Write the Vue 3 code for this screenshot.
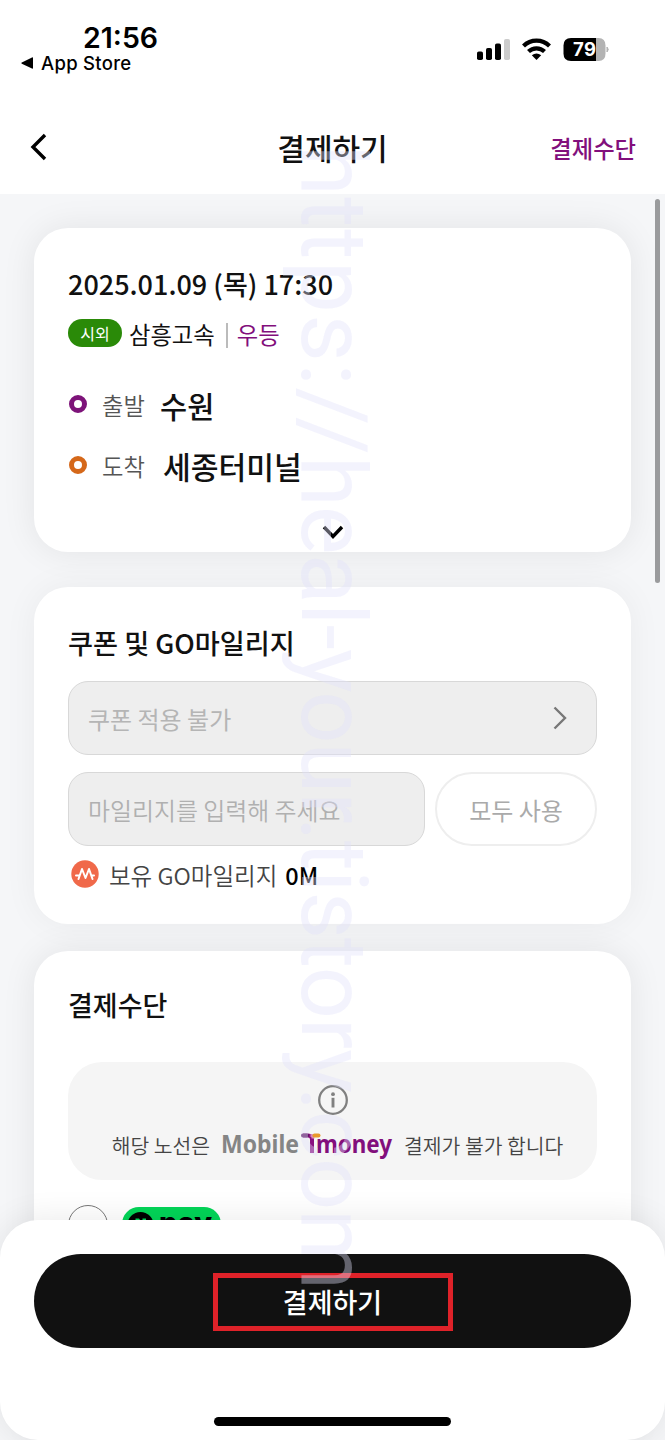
<script setup>
import { ref } from 'vue'

const stops = [
  { type: 'depart', label: '출발', name: '수원' },
  { type: 'arrive', label: '도착', name: '세종터미널' },
]

const mileage = ref('')
const method = ref('')
</script>

<template>
  <div class="screen">
    <div class="status-bar">
      <div class="status-left">
        <p class="clock">21:56</p>
        <p class="back-app">
          <svg width="13" height="12" viewBox="0 0 13 12" aria-hidden="true">
            <path d="M12 1v10q0 1-1 .5L.8 6.700q-1-.7 0-1.300L11 .5q1-.5 1 .5z" />
          </svg>
          App Store
        </p>
      </div>
      <svg class="status-icons" width="134" height="26" viewBox="0 0 134 26" aria-hidden="true">
        <rect x="2" y="14.500" width="6" height="8.500" rx="1.800" />
        <rect x="11" y="11" width="6" height="12" rx="1.800" />
        <rect x="20" y="6.500" width="6" height="16.500" rx="1.800" />
        <rect x="29" y="2" width="6" height="21" rx="1.800" fill="#ccc" />
        <g fill="none" stroke="#000" stroke-width="4.200">
          <path d="M48.500 9a18.500 18.500 0 0 1 26 0" />
          <path d="M53.500 14.600a11.500 11.500 0 0 1 16 0" />
        </g>
        <path d="M61.500 23l-4.700-4.700q4.700-3.600 9.400 0z" />
        <path d="M96 1h25v23H96q-7.500 0-7.500-7.500v-8Q88.500 1 96 1z" />
        <path d="M121 1h2.500q7 0 7 7.500v8q0 7.500-7 7.500H121z" fill="#b3b3b3" />
        <path d="M132 10q2.500 2.500 0 5z" fill="#b3b3b3" stroke="#b3b3b3" />
        <text x="98" y="19" class="battery-level" textLength="23">79</text>
      </svg>
    </div>

    <header class="nav">
      <button type="button" class="nav-back" aria-label="뒤로">
        <svg width="19" height="28" viewBox="0 0 19 28" fill="none">
          <path d="M16 2L4 14l12 12" stroke="#000" stroke-width="3.400" />
        </svg>
      </button>
      <h1 class="nav-title">결제하기</h1>
      <a class="nav-link">결제수단</a>
    </header>

    <main class="content">
      <section class="card trip">
        <p class="trip-date">2025.01.09 (목) 17:30</p>
        <p class="trip-bus">
          <span class="badge">시외</span>
          <span class="company">삼흥고속</span>
          <span class="divider"></span>
          <span class="grade">우등</span>
        </p>
        <div v-for="stop in stops" :key="stop.type" class="stop" :class="stop.type">
          <span class="stop-dot"></span>
          <span class="stop-label">{{ stop.label }}</span>
          <strong class="stop-name">{{ stop.name }}</strong>
        </div>
        <svg class="expand" width="22" height="16" viewBox="0 0 22 16" fill="none" aria-hidden="true">
          <path d="M2 2l9 9.500L20 2" stroke="#000" stroke-width="3.400" />
        </svg>
      </section>

      <section class="card coupon">
        <h2>쿠폰 및 GO마일리지</h2>
        <button type="button" class="field coupon-select" disabled>
          쿠폰 적용 불가
          <svg width="14" height="24" viewBox="0 0 14 24" fill="none">
            <path d="M1.500 1.500L12 12L1.500 22.500" stroke="#777" stroke-width="2.400" />
          </svg>
        </button>
        <div class="mileage-row">
          <input v-model="mileage" class="field mileage-input" placeholder="마일리지를 입력해 주세요" disabled />
          <button type="button" class="use-all" disabled>모두 사용</button>
        </div>
        <p class="balance">
          <svg width="28" height="28" viewBox="0 0 28 28" fill="none" aria-hidden="true">
            <circle cx="14" cy="14" r="13.700" fill="#f0694a" />
            <path
              d="M5 15.500h2.800M7.500 19L11 9l3.500 9L18 9l3.500 10M20.500 15.500H23"
              stroke="#fff"
              stroke-width="2"
              stroke-linejoin="round"
              stroke-linecap="round"
            />
          </svg>
          <span class="balance-label">보유 GO마일리지</span>
          <strong>0M</strong>
        </p>
      </section>

      <section class="card payment">
        <h2>결제수단</h2>
        <div class="notice">
          <svg width="32" height="32" viewBox="0 0 32 32" fill="none" aria-hidden="true">
            <circle cx="16" cy="16" r="13.800" stroke="#808080" stroke-width="2.300" />
            <circle cx="16" cy="10.200" r="1.900" fill="#808080" />
            <path d="M16 13.800v9.700" stroke="#808080" stroke-width="2.900" />
          </svg>
          <p class="notice-text">
            <span>해당 노선은</span>
            <svg class="tmoney" width="172" height="34" viewBox="0 0 172 34">
              <text x="0" y="25" class="logo-mobile" textLength="78" lengthAdjust="spacingAndGlyphs">Mobile</text>
              <path d="M82 7.500h5q4 0 4 4V25" fill="none" stroke="#8a0f80" stroke-width="4" />
              <path d="M82 7.500h4" stroke="#5b1260" stroke-width="4" stroke-linecap="round" />
              <path d="M89.500 7.500h1q1.500 0 1.500 3" fill="none" stroke="#d989b5" stroke-width="3" />
              <path d="M93.500 7.500h4" stroke="#e8992c" stroke-width="4" stroke-linecap="round" />
              <text x="95" y="25" class="logo-money" textLength="76" lengthAdjust="spacingAndGlyphs">money</text>
            </svg>
            <span>결제가 불가 합니다</span>
          </p>
        </div>
        <label class="pay-option">
          <input v-model="method" type="radio" value="npay" class="radio" />
          <svg width="99" height="40" viewBox="0 0 99 40">
            <rect width="99" height="40" rx="17" fill="#03d558" />
            <circle cx="18.500" cy="18" r="13" fill="#000" />
            <path d="M13.500 24v-12.500h3.500l3.500 5v-5H24V24h-3.500l-3.500-5v5z" fill="#03d558" />
            <text x="37" y="26" class="npay-text" textLength="53" lengthAdjust="spacingAndGlyphs">pay</text>
          </svg>
        </label>
      </section>
      <span class="scrollbar"></span>
    </main>

    <footer class="sheet">
      <button type="button" class="pay-btn">
        결제하기
        <span class="highlight"></span>
      </button>
      <span class="home-indicator"></span>
    </footer>

    <svg class="watermark" width="90" height="1160" viewBox="0 0 90 1160" aria-hidden="true">
      <g transform="translate(22 5) rotate(90)">
        <text x="0" textLength="310">https://</text>
        <text x="311" textLength="834">heal-your.tistory.com</text>
      </g>
    </svg>
  </div>
</template>

<style>
body {
  margin: 0;
  background: #f5f6f8;
}
</style>

<style scoped>
.screen {
  position: relative;
  display: flex;
  flex-direction: column;
  width: 665px;
  height: 1440px;
  overflow: hidden;
  background: #f5f6f8;
  color: #111;
  font-family: 'Noto Sans CJK KR', sans-serif;
}

.screen * {
  box-sizing: border-box;
}

p,
h1,
h2 {
  margin: 0;
}

button,
input {
  font-family: inherit;
}

.status-bar {
  display: flex;
  justify-content: space-between;
  height: 100px;
  flex-shrink: 0;
  padding: 22px 56px 0 21px;
  background: #fff;
  color: #000;
  font-family: Inter, sans-serif;
}

.clock {
  padding-left: 62px;
  font-size: 28.500px;
  font-weight: 600;
  line-height: 31px;
}

.back-app {
  display: flex;
  align-items: center;
  gap: 7px;
  font-size: 18.500px;
  font-weight: 500;
  line-height: 20px;
  letter-spacing: 0.3px;
}

.status-icons {
  margin-top: 15px;
}

.battery-level {
  fill: #fff;
  font-size: 18.500px;
  font-weight: 700;
}

.nav {
  display: grid;
  grid-template-columns: 1fr auto 1fr;
  align-items: center;
  height: 94px;
  flex-shrink: 0;
  padding: 0 29px;
  background: #fff;
}

.nav-back {
  display: flex;
  justify-self: start;
  padding: 0;
  border: 0;
  background: none;
}

.nav-title {
  font-size: 30px;
  font-weight: 500;
  line-height: 40px;
}

.nav-link {
  justify-self: end;
  padding-top: 2px;
  color: #820f7c;
  font-size: 23.300px;
  font-weight: 500;
}

.content {
  position: relative;
  flex: 1;
  min-height: 0;
  padding: 34px 34px 0;
  overflow: hidden;
}

.card {
  display: flex;
  flex-direction: column;
  padding: 0 34px;
  border-radius: 34px;
  background: #fff;
  box-shadow: 0 0 34px rgba(0, 0, 0, 0.08);
}

.trip {
  height: 324px;
  padding-top: 38px;
}

.trip-date {
  font-size: 27px;
  font-weight: 500;
  line-height: 36px;
}

.trip-bus {
  display: flex;
  align-items: center;
  height: 30px;
  margin-top: 16px;
  font-size: 23.300px;
}

.company,
.grade {
  padding-top: 2px;
}

.badge {
  width: 54px;
  height: 28px;
  margin-right: 7px;
  border-radius: 14px;
  background: #2a8a08;
  color: #fff;
  font-size: 16px;
  line-height: 28px;
  text-align: center;
}

.divider {
  width: 2px;
  height: 25px;
  margin: 4px 9px 0 11px;
  background: #bbb;
}

.grade {
  color: #820f7c;
}

.stop {
  display: flex;
  align-items: center;
  height: 40px;
  margin-top: 21px;
}

.depart {
  margin-top: 37px;
}

.stop-dot {
  width: 18px;
  height: 18px;
  margin: 0 15px 2px 1px;
  border: 5px solid #7d1379;
  border-radius: 50%;
}

.arrive .stop-dot {
  border-color: #d5681a;
}

.stop-label {
  width: 58px;
  color: #555;
  font-size: 23.300px;
  font-weight: 350;
}

.stop-name {
  font-size: 29.500px;
  font-weight: 500;
}

.arrive .stop-label {
  width: 61px;
}

.arrive .stop-name {
  font-size: 30.200px;
}

.expand {
  align-self: center;
  margin-top: 39px;
}

.coupon {
  height: 337px;
  margin-top: 35px;
  padding-top: 35px;
  box-shadow: 0 0 34px rgba(0, 0, 0, 0.05);
}

h2 {
  font-size: 27px;
  font-weight: 500;
  line-height: 40px;
}

.coupon h2 {
  font-size: 27.200px;
}

.field {
  height: 74px;
  padding: 0 29px 0 19px;
  border: 1px solid #d8d8d8;
  border-radius: 20px;
  background: #eee;
  color: #b5b5b5;
  font-size: 24px;
}

.coupon-select {
  display: flex;
  align-items: center;
  justify-content: space-between;
  margin-top: 19px;
}

.mileage-row {
  display: flex;
  gap: 10px;
  margin-top: 17px;
}

.mileage-input {
  width: 357px;
  padding-right: 0;
  font-size: 23.900px;
  font-weight: 350;
}

.mileage-input::placeholder {
  color: #b0b0b0;
  opacity: 1;
}

.use-all {
  flex: 1;
  padding: 0;
  border: 2px solid #eee;
  border-radius: 37px;
  background: #fff;
  color: #aaa;
  font-size: 24px;
}

.balance {
  display: flex;
  align-items: center;
  height: 30px;
  margin: 13px 0 0 3px;
  font-size: 23.500px;
}

.balance-label,
.balance strong {
  padding-top: 1px;
}

.balance-label {
  margin: 0 8px 0 10px;
  color: #444;
  font-weight: 350;
}

.balance strong {
  color: #000;
  font-weight: 500;
}

.payment {
  height: 500px;
  margin-top: 27px;
  padding-top: 34px;
}

.notice {
  display: flex;
  flex-direction: column;
  align-items: center;
  height: 118px;
  margin-top: 37px;
  padding-top: 22px;
  border-radius: 34px;
  background: #f5f5f5;
}

.notice-text {
  display: flex;
  align-items: center;
  gap: 11px;
  margin-top: 12px;
  padding-left: 10px;
  color: #444;
  font-size: 20.400px;
  font-weight: 350;
  line-height: 34px;
}

.tmoney {
  overflow: visible;
}

.logo-mobile,
.logo-money {
  font-family: 'Noto Sans', sans-serif;
  font-size: 24.500px;
  font-weight: 700;
}

.logo-mobile {
  fill: #858585;
}

.logo-money {
  fill: #820f7c;
}

.pay-option {
  display: flex;
  gap: 14px;
  margin-top: 25px;
}

.radio {
  appearance: none;
  width: 40px;
  height: 40px;
  margin: 0;
  border: 1.500px solid #777;
  border-radius: 50%;
}

.pay-option svg {
  margin-top: 2px;
}

.npay-text {
  font-family: Inter, sans-serif;
  font-size: 28px;
  font-weight: 800;
}

.scrollbar {
  position: absolute;
  top: 5px;
  right: 5px;
  width: 5px;
  height: 384px;
  border-radius: 3px;
  background: #9a9b9d;
}

.sheet {
  position: absolute;
  right: 0;
  bottom: 0;
  left: 0;
  display: flex;
  flex-direction: column;
  align-items: center;
  justify-content: space-between;
  height: 220px;
  padding: 34px 34px 14px;
  border-radius: 38px;
  background: #fff;
  box-shadow: 0 0 34px rgba(0, 0, 0, 0.09);
}

.pay-btn {
  position: relative;
  width: 100%;
  height: 94px;
  border: 0;
  border-radius: 47px;
  background: #111;
  color: #fff;
  font-size: 27px;
  font-weight: 500;
}

.highlight {
  position: absolute;
  top: 19px;
  left: 179px;
  width: 240px;
  height: 58px;
  border: 5px solid #df2229;
}

.home-indicator {
  width: 237px;
  height: 9px;
  border-radius: 5px;
  background: #000;
}

.watermark {
  position: absolute;
  top: 140px;
  left: 280px;
  pointer-events: none;
}

.watermark text {
  fill: rgba(226, 226, 250, 0.4);
  font-family: Roboto, sans-serif;
  font-size: 92px;
}
</style>
